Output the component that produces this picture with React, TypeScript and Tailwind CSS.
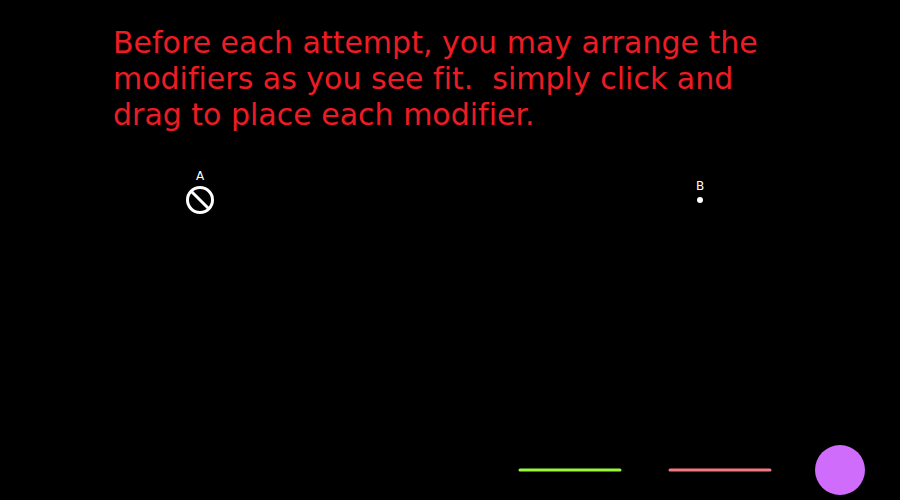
import React from "react";

function PointA() {
  return (
    <div className="flex w-10 flex-col items-center gap-[3px]">
      <span className="text-[12px] leading-[14px]">A</span>
      <svg className="h-7 w-7" viewBox="0 0 28 28" fill="none" stroke="#ffffff" strokeWidth="3" aria-hidden="true">
        <circle cx="14" cy="14" r="12.5" />
        <path d="M5.2 5.2 22.8 22.8" />
      </svg>
    </div>
  );
}

function PointB() {
  return (
    <div className="flex w-10 flex-col items-center gap-1 pt-[10px]">
      <span className="text-[12px] leading-[14px]">B</span>
      <span className="size-[6px] rounded-full bg-white" />
    </div>
  );
}

function Wall({ color }: { color: string }) {
  return (
    <svg className="h-1 w-[104px]" viewBox="0 0 104 4" fill="none" aria-label="Wall modifier">
      <path d="M2 2H102" stroke={color} strokeWidth="3" strokeLinecap="round" />
    </svg>
  );
}

export default function App() {
  return (
    <main className="flex min-h-screen flex-col bg-black font-['DejaVu_Sans',sans-serif] text-white">
      <p className="px-[113px] pt-[25px] text-[30px] leading-[36px] whitespace-pre text-[#ed1c24] [font-variant-ligatures:none]">
        {"Before each attempt, you may arrange the\nmodifiers as you see fit.  simply click and\ndrag to place each modifier."}
      </p>
      <section className="flex items-start justify-between px-[180px] pt-9">
        <PointA />
        <PointB />
      </section>
      <footer className="mt-auto flex items-center justify-end pr-[35px] pb-[5px]">
        <div className="flex gap-[46px] pr-[43px]">
          <Wall color="#97f83a" />
          <Wall color="#f27884" />
        </div>
        <div className="size-[50px] rounded-full bg-[#cf6cfb]" />
      </footer>
    </main>
  );
}
